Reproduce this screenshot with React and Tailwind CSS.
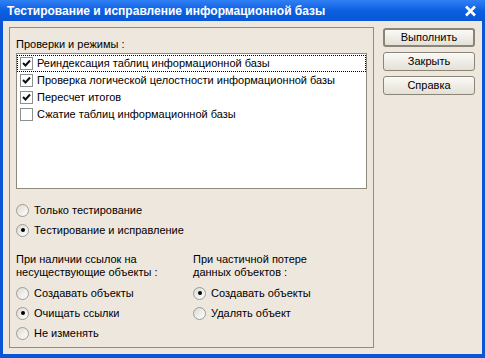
import React from 'react';

const font = { fontFamily: '"Liberation Sans", Arial, sans-serif' };

function Check({ checked }) {
  return (
    <span className="w-[13px] h-[13px] border border-[#8e8f8f] bg-white flex items-center justify-center shrink-0">
      {checked && (
        <svg width="9" height="9" viewBox="0 0 9 9">
          <path d="M1 4 L3.5 6.5 L8 1.5" fill="none" stroke="#111" strokeWidth="2" />
        </svg>
      )}
    </span>
  );
}

function Radio({ on, label }) {
  return (
    <div className="h-[20px] flex items-center gap-[5px]">
      <span className="w-[13px] h-[13px] rounded-full border border-[#9c9b94] bg-gradient-to-br from-[#dcdad2] to-white flex items-center justify-center shrink-0">
        {on && <span className="w-[4px] h-[4px] rounded-full bg-black" />}
      </span>
      <span>{label}</span>
    </div>
  );
}

function Btn({ children, def }) {
  return (
    <button
      className={
        'w-[92px] h-[19px] rounded-[3px] bg-gradient-to-b from-[#fbfaf6] to-[#e3e0d6] text-[11px] leading-none text-black flex items-center justify-center ' +
        (def ? 'border-2 border-[#8a8577]' : 'border border-[#8a8577]')
      }
    >
      {children}
    </button>
  );
}

const rows = [
  { t: 'Реиндексация таблиц информационной базы', c: true, focus: true },
  { t: 'Проверка логической целостности информационной базы', c: true },
  { t: 'Пересчет итогов', c: true },
  { t: 'Сжатие таблиц информационной базы', c: false },
];

export default function App() {
  return (
    <div className="w-[485px] h-[358px] bg-[#0a55d6] flex flex-col text-[11px] text-black" style={font}>
      {/* Заголовок */}
      <div className="h-[21px] bg-gradient-to-b from-[#2f80f4] via-[#0b60e2] to-[#0956d4] flex items-center justify-between pl-[7px] pr-[8px]">
        <span className="text-white font-bold text-[12px] leading-none">
          Тестирование и исправление информационной базы
        </span>
        <svg width="13" height="12" viewBox="0 0 13 12">
          <path d="M2 1.5 L11 10.5 M11 1.5 L2 10.5" stroke="#fff" strokeWidth="2.6" />
        </svg>
      </div>

      <div className="flex-1 mx-[3px] mb-[4px] bg-[#eee7de] flex pt-[6px] pl-[6px]">
        {/* Группа */}
        <div className="w-[365px] h-[321px] border border-[#928c7e] pl-[6px] pr-[6px] flex flex-col">
          <div className="mt-[9px] h-[14px] leading-[14px]">Проверки и режимы :</div>
          <div className="mt-[2px] h-[136px] border border-[#8f8a7c] bg-white pt-px">
            {rows.map((r) => (
              <div
                key={r.t}
                className={
                  'h-[17px] flex items-center gap-[4px] pl-[2px] ' +
                  (r.focus ? 'border border-dotted border-black' : 'border border-transparent')
                }
              >
                <Check checked={r.c} />
                <span className="whitespace-nowrap">{r.t}</span>
              </div>
            ))}
          </div>

          <div className="mt-[11px]">
            <Radio label="Только тестирование" />
            <Radio on label="Тестирование и исправление" />
          </div>

          <div className="mt-[13px] flex">
            <div className="w-[177px]">
              <div className="leading-[13px]">При наличии ссылок на<br />несуществующие объекты :</div>
              <div className="mt-[4px]">
                <Radio label="Создавать объекты" />
                <Radio on label="Очищать ссылки" />
                <Radio label="Не изменять" />
              </div>
            </div>
            <div>
              <div className="leading-[13px]">При частичной потере<br />данных объектов :</div>
              <div className="mt-[4px]">
                <Radio on label="Создавать объекты" />
                <Radio label="Удалять объект" />
              </div>
            </div>
          </div>
        </div>

        {/* Кнопки */}
        <div className="ml-[9px] mt-px flex flex-col gap-[5px]">
          <Btn def>Выполнить</Btn>
          <Btn>Закрыть</Btn>
          <Btn>Справка</Btn>
        </div>
      </div>
    </div>
  );
}
